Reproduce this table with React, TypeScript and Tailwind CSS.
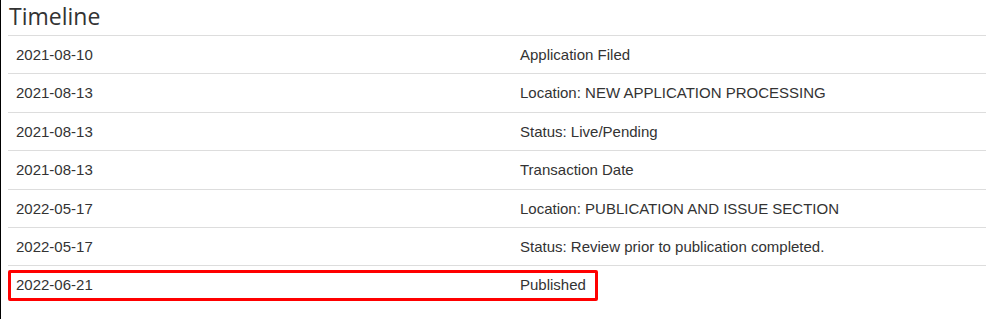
import React from "react";

const rows: [string, string][] = [
  ["2021-08-10", "Application Filed"],
  ["2021-08-13", "Location: NEW APPLICATION PROCESSING"],
  ["2021-08-13", "Status: Live/Pending"],
  ["2021-08-13", "Transaction Date"],
  ["2022-05-17", "Location: PUBLICATION AND ISSUE SECTION"],
  ["2022-05-17", "Status: Review prior to publication completed."],
  ["2022-06-21", "Published"],
];

export default function App() {
  return (
    <div className="w-[986px] h-[319px] overflow-hidden bg-white border-l border-black">
      <div className="pl-[7px]">
        <div
          className="h-[35px] text-[23px] leading-[33px] text-[#333] pl-[1px]"
          style={{ fontFamily: '"Open Sans", sans-serif' }}
        >
          Timeline
        </div>
        <div
          className="text-[15px] leading-[21.4px] text-[#333]"
          style={{ fontFamily: '"Liberation Sans", Arial, sans-serif' }}
        >
          {rows.map(([d, t], i) => (
            <div
              key={i}
              className="relative flex border-t border-[#ddd]"
            >
              <div className="w-[504px] shrink-0 p-[8px]">{d}</div>
              <div className="p-[8px] whitespace-nowrap">{t}</div>
              {i === rows.length - 1 && (
                <div className="absolute left-0 top-[4px] w-[590px] h-[31px] border-[3px] border-[#ff0000] rounded-[2px]" />
              )}
            </div>
          ))}
        </div>
      </div>
    </div>
  );
}
